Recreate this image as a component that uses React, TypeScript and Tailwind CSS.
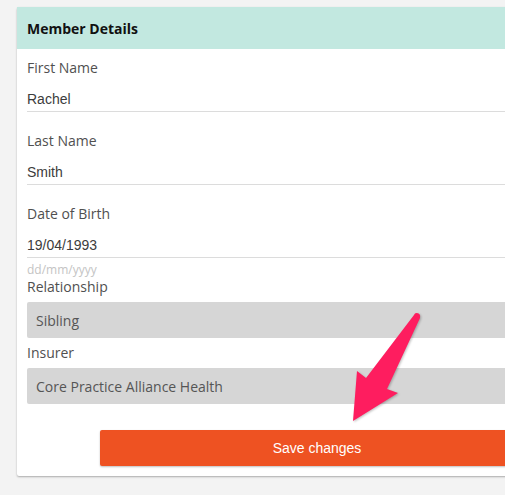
import React from "react";

const fields = [
  { label: "First Name", value: "Rachel" },
  { label: "Last Name", value: "Smith" },
  { label: "Date of Birth", value: "19/04/1993", hint: "dd/mm/yyyy" },
];

const selects = [
  { label: "Relationship", value: "Sibling" },
  { label: "Insurer", value: "Core Practice Alliance Health" },
];

export default function App() {
  return (
    <div className="relative min-h-screen overflow-hidden bg-[#f3f3f3] pl-[17px] pt-[7px]">
      <div className="w-[600px] rounded-[2px] bg-white shadow-[0_1px_2px_rgba(0,0,0,0.3)]">
        <div className="flex h-[42px] items-center bg-[#c2e8e0] px-[10px] font-['Open_Sans',sans-serif] text-[14px] font-bold text-[#111]">
          Member Details
        </div>
        <div className="px-[10px] pb-[10px] pt-[8px]">
          {fields.map((f) => (
            <div key={f.label} className={f.hint ? "" : "mb-[18px]"}>
              <div className="h-[20px] font-['Open_Sans',sans-serif] text-[14px] leading-[22px] text-[#505050]">
                {f.label}
              </div>
              <div className="h-[35px] border-b border-[#dcdcdc] pt-[14px] font-['Liberation_Sans',Arial,sans-serif] text-[14px] leading-[16px] text-[#3c3c3c]">
                {f.value}
              </div>
              {f.hint && (
                <div className="mt-[4px] h-[14px] font-['Open_Sans',sans-serif] text-[12px] leading-[15px] text-[#c4c4c4]">
                  {f.hint}
                </div>
              )}
            </div>
          ))}
          {selects.map((s, i) => (
            <div key={s.label} className={i > 0 ? "mt-[4px]" : ""}>
              <div className="h-[20px] font-['Open_Sans',sans-serif] text-[14px] leading-[22px] text-[#505050]">
                {s.label}
              </div>
              <div className="mt-[6px] flex h-[36px] items-center rounded-[2px] bg-[#d6d6d6] px-[9px] font-['Open_Sans',sans-serif] text-[14px] text-[#555]">
                {s.value}
              </div>
            </div>
          ))}
          <button className="ml-[73px] mt-[26px] flex h-[36px] w-[434px] items-center justify-center rounded-[2px] bg-[#ee5222] font-['Liberation_Sans',Arial,sans-serif] text-[14px] text-white shadow-[0_1px_2px_rgba(0,0,0,0.25)]">
            Save changes
          </button>
        </div>
      </div>
      <svg
        className="pointer-events-none absolute left-0 top-0"
        width="505"
        height="495"
        viewBox="0 0 505 495"
      >
        <path
          d="M416 313 Q421 313 420 318 L387 389 L398 393 L353 421 L357 371 L366 378 L414 315 Q414.5 313.5 416 313 Z"
          fill="#fe1d5f"
          style={{ filter: "drop-shadow(1px 1px 1px rgba(0,0,0,0.25))" }}
        />
      </svg>
    </div>
  );
}
